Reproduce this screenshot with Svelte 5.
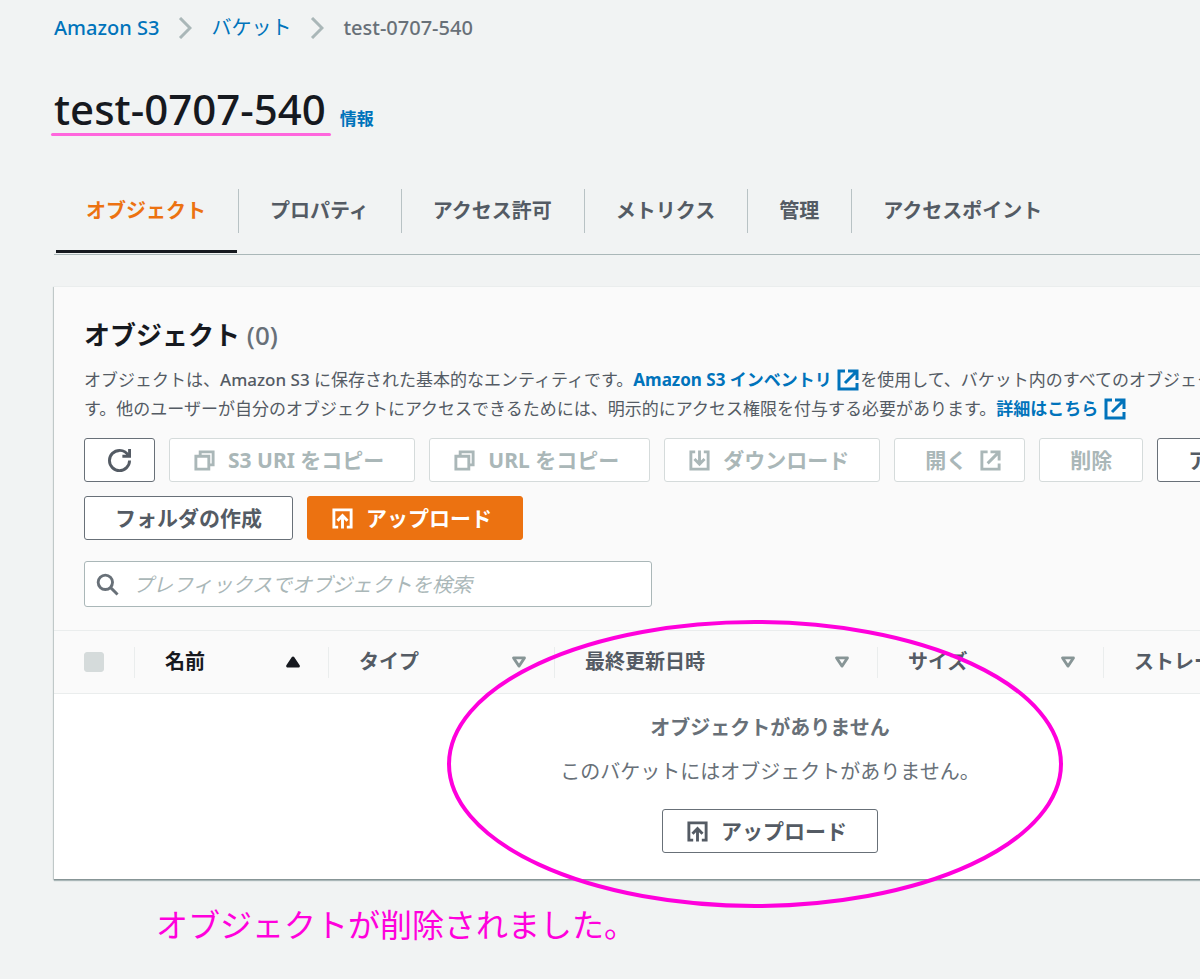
<script lang="ts">
  type IconName = "refresh" | "copy" | "download" | "upload" | "external" | "caret" | "search" | "sortUp" | "sortDown";

  interface Action {
    label: string;
    icon?: IconName;
    trailing?: IconName;
    disabled?: boolean;
    primary?: boolean;
  }

  const bucket = "test-0707-540";

  const tabs = ["オブジェクト", "プロパティ", "アクセス許可", "メトリクス", "管理", "アクセスポイント"];

  const actions: Action[] = [
    { label: "S3 URI をコピー", icon: "copy", disabled: true },
    { label: "URL をコピー", icon: "copy", disabled: true },
    { label: "ダウンロード", icon: "download", disabled: true },
    { label: "開く", trailing: "external", disabled: true },
    { label: "削除", disabled: true },
    { label: "アクション", trailing: "caret" },
    { label: "フォルダの作成" },
    { label: "アップロード", icon: "upload", primary: true },
  ];

  const columns = [
    { key: "name", label: "名前" },
    { key: "type", label: "タイプ" },
    { key: "modified", label: "最終更新日時" },
    { key: "size", label: "サイズ" },
    { key: "storage", label: "ストレージクラス" },
  ];

  let activeTab = $state(0);
  let sortColumn = $state("name");
  let query = $state("");
</script>

{#snippet icon(name: IconName)}
  <svg class="icon icon-{name}" viewBox="0 0 16 16" aria-hidden="true">
    {#if name === "refresh"}
      <path d="M10 5h5V0" />
      <path d="M15 8a7 7 0 0 1-14 0 7 7 0 0 1 7-7 6.9 6.9 0 0 1 6.3 4" />
    {:else if name === "copy"}
      <path d="M2 5h9v9H2z" />
      <path d="M5 5V2h9v9h-3" />
    {:else if name === "download"}
      <path d="M5 2H2v12h12V2h-3" />
      <path d="M8 1v9M4.5 7 8 10.5 11.5 7" />
    {:else if name === "upload"}
      <path d="M5 14H2V2h12v12h-3" />
      <path d="M8 15V6M4.5 9.5 8 6l3.5 3.5" />
    {:else if name === "external"}
      <path d="M6 2H2v12h12v-4" />
      <path d="M8 2h6v6M6 10l8-8" />
    {:else if name === "caret"}
      <path class="solid" d="M4 5h8l-4 6z" />
    {:else if name === "search"}
      <circle cx="6.5" cy="6.5" r="5" />
      <path d="m10 10 5 5" />
    {:else if name === "sortUp"}
      <path class="solid" d="M4 11h8L8 5z" />
    {:else}
      <path d="M4 5h8l-4 6z" />
    {/if}
  </svg>
{/snippet}

<div class="page">
  <nav class="breadcrumb" aria-label="パンくずリスト">
    <a class="latin" href="#s3">Amazon S3</a>
    <svg class="chevron" viewBox="0 0 14 22" aria-hidden="true"><path d="m2 1 10 10L2 21" /></svg>
    <a href="#buckets">バケット</a>
    <svg class="chevron" viewBox="0 0 14 22" aria-hidden="true"><path d="m2 1 10 10L2 21" /></svg>
    <span class="latin">{bucket}</span>
  </nav>

  <header class="title">
    <h1>{bucket}</h1>
    <a href="#info">情報</a>
  </header>

  <div class="tabs" role="tablist">
    {#each tabs as tab, i}
      <button
        class="tab"
        class:active={activeTab === i}
        role="tab"
        aria-selected={activeTab === i}
        onclick={() => (activeTab = i)}>{tab}</button
      >
    {/each}
  </div>

  <section class="panel">
    <div class="panel-header">
      <h2>オブジェクト <span class="counter">(0)</span></h2>
      <p class="description">
        オブジェクトは、<span class="latin">Amazon S3</span> に保存された基本的なエンティティです。<a href="#inventory"
          >Amazon S3 インベントリ {@render icon("external")}</a
        >を使用して、バケット内のすべてのオブジェクトのリストを取得できま<br />す。他のユーザーが自分のオブジェクトにアクセスできるためには、明示的にアクセス権限を付与する必要があります。<a
          href="#more">詳細はこちら {@render icon("external")}</a
        >
      </p>

      <div class="actions">
        <button class="button refresh" aria-label="更新">{@render icon("refresh")}</button>
        {#each actions as action}
          <button
            class="button"
            class:primary={action.primary}
            class:leading={action.icon}
            class:trailing={action.trailing}
            disabled={action.disabled}
          >
            {#if action.icon}{@render icon(action.icon)}{/if}
            <span>{action.label}</span>
            {#if action.trailing}{@render icon(action.trailing)}{/if}
          </button>
        {/each}
      </div>

      <label class="search">
        {@render icon("search")}
        <input
          type="text"
          aria-label="プレフィックスでオブジェクトを検索"
          placeholder="プレフィックスでオブジェクトを検索"
          bind:value={query}
        />
      </label>
    </div>

    <table>
      <colgroup>
        <col class="col-check" />
        {#each columns as column}
          <col class="col-{column.key}" />
        {/each}
      </colgroup>
      <thead>
        <tr>
          <th class="check"><input type="checkbox" aria-label="すべて選択" disabled /></th>
          {#each columns as column}
            <th class:sorted={sortColumn === column.key}>
              <button class="sort" onclick={() => (sortColumn = column.key)}>
                <span>{column.label}</span>
                {@render icon(sortColumn === column.key ? "sortUp" : "sortDown")}
              </button>
            </th>
          {/each}
        </tr>
      </thead>
      <tbody>
        <tr>
          <td colspan={columns.length + 1}>
            <div class="empty">
              <strong>オブジェクトがありません</strong>
              <p>このバケットにはオブジェクトがありません。</p>
              <button class="button leading">
                {@render icon("upload")}
                <span>アップロード</span>
              </button>
            </div>
          </td>
        </tr>
      </tbody>
    </table>

    <svg class="circle" viewBox="0 0 616 288" aria-hidden="true">
      <ellipse cx="308" cy="144" rx="306" ry="142" />
    </svg>
  </section>

  <p class="note">オブジェクトが削除されました。</p>
</div>

<style>
  :global(body) {
    background: #f1f3f3;
    overflow: hidden;
  }

  .page {
    min-width: 1432px;
    padding: 12px 54px 36px;
    font-family: "Noto Sans", "Noto Sans CJK JP", sans-serif;
    font-size: 20px;
    line-height: 32px;
    color: #545b64;
  }

  a {
    color: #0073bb;
    text-decoration: none;
  }

  button,
  input {
    font-family: inherit;
  }

  .latin {
    font-weight: 500;
  }

  .icon {
    flex: none;
    width: 23px;
    height: 23px;
    fill: none;
    stroke: currentColor;
    stroke-width: 2;
  }

  .icon .solid {
    fill: currentColor;
  }

  .icon-sortUp,
  .icon-sortDown,
  .icon-caret {
    stroke-linejoin: round;
  }

  .breadcrumb {
    display: flex;
    align-items: center;
    gap: 19px;
    color: #687078;
  }

  .chevron {
    width: 14px;
    height: 22px;
    fill: none;
    stroke: #aab7b8;
    stroke-width: 3;
  }

  .title {
    display: flex;
    align-items: baseline;
    gap: 14px;
    margin-top: 35px;
  }

  h1 {
    position: relative;
    margin: 0;
    font-size: 42px;
    line-height: 60px;
    font-weight: 500;
    color: #16191f;
  }

  h1::after {
    content: "";
    position: absolute;
    left: -3px;
    right: -5px;
    bottom: 3px;
    height: 3px;
    border-radius: 2px;
    background: #ff66dd;
  }

  .title a {
    font-size: 17px;
    font-weight: 700;
  }

  .tabs {
    display: flex;
    height: 66px;
    margin-top: 49px;
    border-bottom: 1px solid #aab7b8;
  }

  .tab {
    position: relative;
    padding: 0 32px 24px;
    border: 0;
    background: none;
    font-size: 20px;
    font-weight: 700;
    color: #545b64;
    cursor: pointer;
  }

  .tab + .tab::before {
    content: "";
    position: absolute;
    top: 1px;
    left: 0;
    width: 1px;
    height: 44px;
    background: #b8c2c4;
  }

  .tab.active {
    color: #ec7211;
  }

  .tab.active::after {
    content: "";
    position: absolute;
    left: 2px;
    right: 1px;
    bottom: 1px;
    height: 3px;
    background: #16191f;
  }

  .panel {
    position: relative;
    margin-top: 31px;
    background: #fff;
    border-top: 1px solid #eaeded;
    box-shadow:
      0 1px 0 #879596,
      0 2px 1px #aab7b8,
      -1px 1px 1px #c4cccc;
    min-width: 1432px;
  }

  .panel-header {
    padding: 29px 30px 23px;
    background: #fafafa;
  }

  h2 {
    margin: 0;
    font-size: 26px;
    line-height: 38px;
    font-weight: 700;
    color: #16191f;
  }

  .counter {
    font-weight: 500;
    color: #687078;
  }

  .description {
    margin: 11px 0 15px;
    font-size: 17px;
    line-height: 29px;
    white-space: nowrap;
  }

  .description a {
    font-weight: 700;
  }

  .description .icon {
    height: 24px;
    width: 24px;
    vertical-align: -6px;
  }

  .actions {
    display: flex;
    flex-wrap: wrap;
    gap: 14px;
  }

  .button {
    display: inline-flex;
    align-items: center;
    gap: 12px;
    height: 44px;
    padding: 0 30px;
    border: 1px solid #687078;
    border-radius: 3px;
    background: #fff;
    font-size: 21px;
    line-height: 30px;
    font-weight: 700;
    color: #545b64;
    cursor: pointer;
  }

  .button.leading {
    padding-left: 23px;
  }

  .button.trailing {
    padding-right: 22px;
  }

  .button.refresh {
    padding: 0 23px;
  }

  .button:disabled {
    border-color: #d5dbdb;
    color: #aab7b8;
    cursor: default;
  }

  .button.primary {
    border-color: #ec7211;
    background: #ec7211;
    color: #fff;
  }

  .search {
    display: flex;
    align-items: center;
    gap: 14px;
    box-sizing: border-box;
    width: 568px;
    height: 46px;
    margin-top: 21px;
    padding: 0 11px;
    border: 1px solid #aab7b8;
    border-radius: 3px;
    background: #fff;
    color: #687078;
  }

  .search input {
    flex: 1;
    padding: 0;
    border: 0;
    outline: 0;
    background: none;
    font-size: 20px;
    color: #16191f;
  }

  .search input::placeholder {
    font-style: italic;
    color: #aab7b8;
    opacity: 1;
  }

  table {
    width: 100%;
    table-layout: fixed;
    border-collapse: collapse;
  }

  .col-check {
    width: 80px;
  }

  .col-name {
    width: 194px;
  }

  .col-type,
  .col-size {
    width: 226px;
  }

  .col-modified {
    width: 323px;
  }

  th {
    position: relative;
    height: 62px;
    padding: 0;
    border-top: 1px solid #eaeded;
    border-bottom: 1px solid #eaeded;
    background: #fafafa;
    text-align: left;
  }

  th + th::before {
    content: "";
    position: absolute;
    top: 16px;
    left: 0;
    width: 1px;
    height: 31px;
    background: #eaeded;
  }

  .check input {
    display: block;
    appearance: none;
    width: 20px;
    height: 20px;
    margin: 0 30px;
    border: 1px solid #d5dbdb;
    border-radius: 3px;
    background: #d5dbdb;
  }

  .sort {
    display: flex;
    align-items: center;
    justify-content: space-between;
    width: 100%;
    padding: 0 24px 0 31px;
    border: 0;
    background: none;
    font-size: 20px;
    line-height: 30px;
    font-weight: 700;
    white-space: nowrap;
    color: #545b64;
    cursor: pointer;
  }

  .sort .icon {
    width: 22px;
    height: 22px;
    color: #879596;
  }

  .sorted .sort,
  .sorted .sort .icon {
    color: #16191f;
  }

  td {
    padding: 0;
  }

  .empty {
    display: flex;
    flex-direction: column;
    align-items: center;
    padding: 18px 0 26px;
    color: #687078;
  }

  .empty p {
    margin: 12px 0 21px;
  }

  .circle {
    position: absolute;
    top: 333px;
    left: 393px;
    width: 616px;
    height: 288px;
    fill: none;
    stroke: #ff00dc;
    stroke-width: 4;
    pointer-events: none;
  }

  .note {
    margin: 22px 0 0 102px;
    font-size: 32px;
    line-height: 48px;
    color: #ff00dc;
  }
</style>
